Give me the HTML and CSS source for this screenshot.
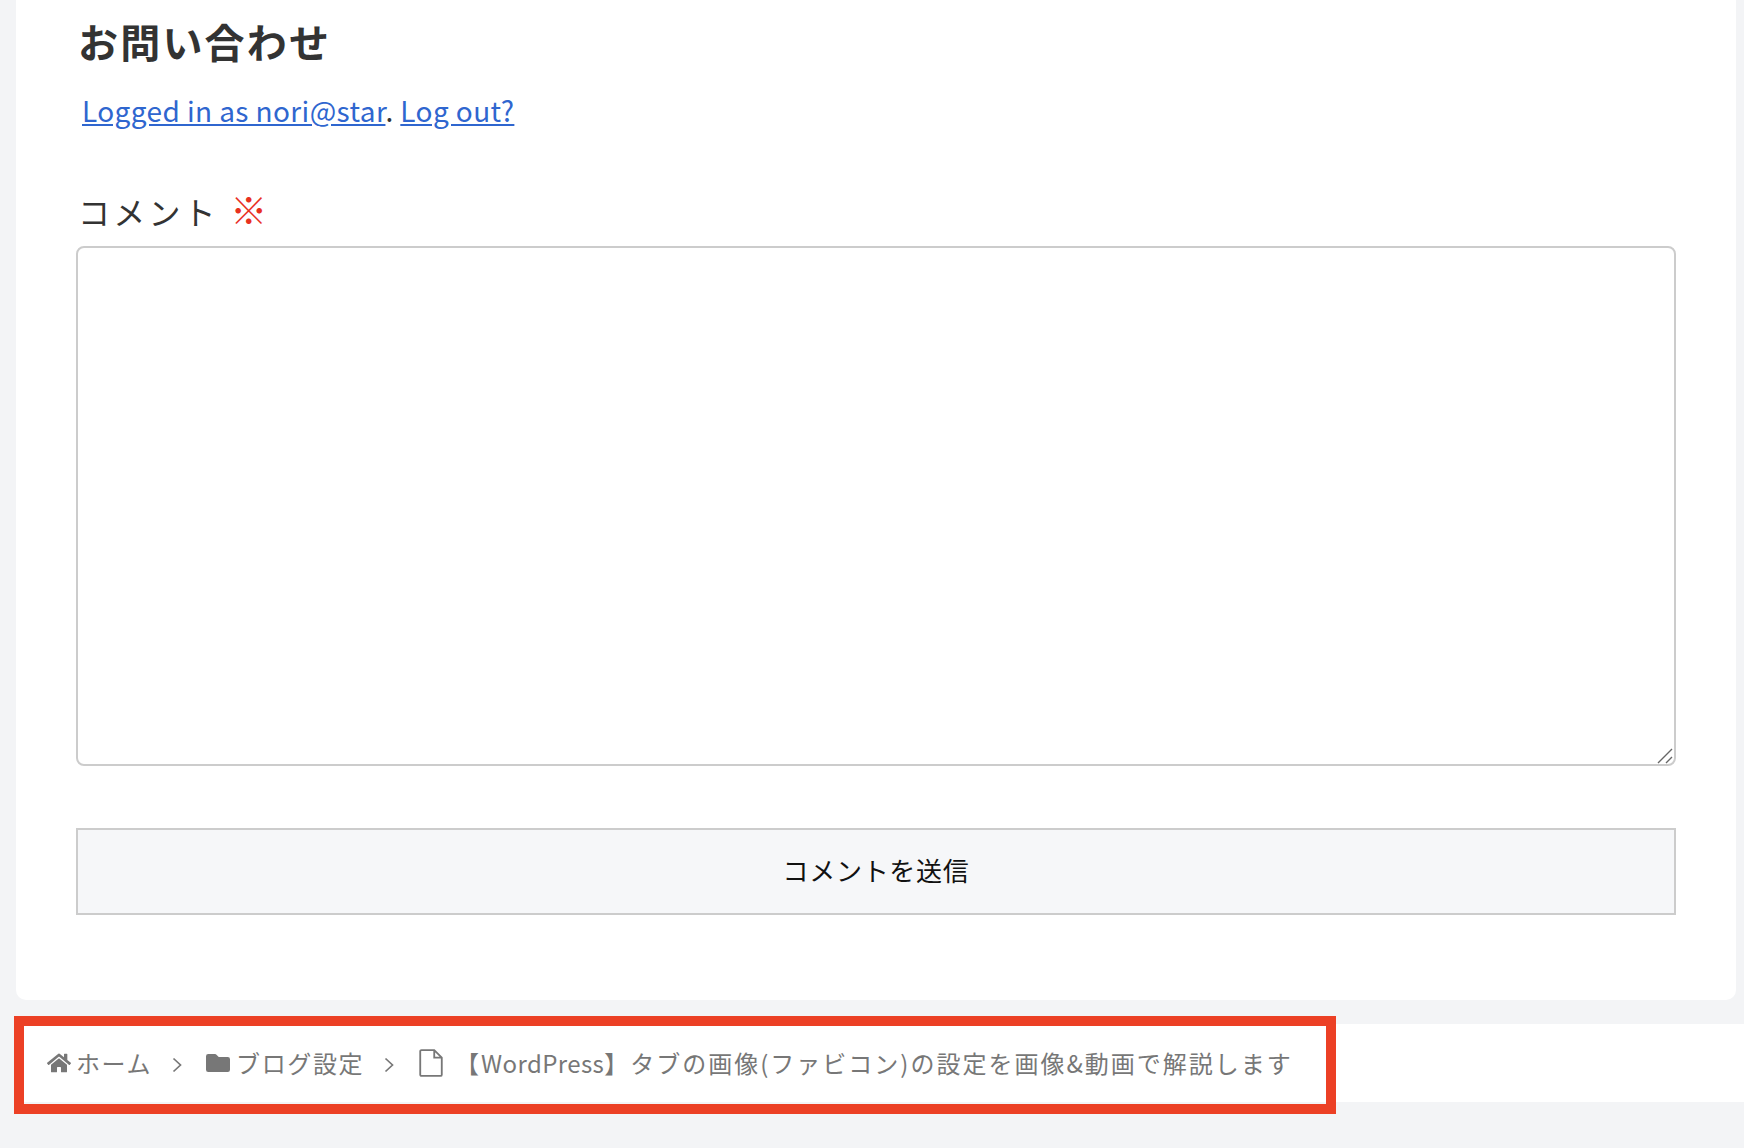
FILE: index.html
```html
<!DOCTYPE html>
<html lang="ja">
<head>
<meta charset="utf-8">
<title>お問い合わせ</title>
<link rel="stylesheet" href="styles.css">
</head>
<body>
<main class="card">
  <h2 class="title">お問い合わせ</h2>
  <p class="logged"><a href="#">Logged in as nori@star</a>. <a href="#">Log out?</a></p>
  <form class="form">
    <label class="label" for="comment">コメント <span class="req">※</span></label>
    <div class="area-wrap">
      <textarea id="comment" class="area"></textarea>
      <svg class="grip" viewBox="0 0 16 16"><path d="M1 15 15 1M9 15l6-6"/></svg>
    </div>
    <button type="button" class="submit"><span class="submit-text">コメントを送信</span></button>
  </form>
</main>
<nav class="crumbs">
  <svg class="ic ic-home" viewBox="0 0 576 512"><path d="M280.400 148.300 96 300.100V464a16 16 0 0 0 16 16l112-.3a16 16 0 0 0 15.900-16V368a16 16 0 0 1 16-16h64a16 16 0 0 1 16 16v95.600a16 16 0 0 0 16 16.100l112 .3a16 16 0 0 0 16-16V300L295.700 148.300a12.200 12.200 0 0 0-15.300 0zM571.600 251.500 488 182.600V44a12 12 0 0 0-12-12h-56a12 12 0 0 0-12 12v72.600L318.500 43a48 48 0 0 0-61 0L4.300 251.500a12 12 0 0 0-1.600 16.900l25.500 31a12 12 0 0 0 16.900 1.600l235.200-193.700a12.200 12.200 0 0 1 15.300 0L530.900 301a12 12 0 0 0 16.900-1.600l25.500-31a12 12 0 0 0-1.700-16.900z"/></svg>
  <span class="crumb">ホーム</span>
  <svg class="sep" viewBox="0 0 10 16"><path d="M1.500 1.500 8.500 8l-7 6.500"/></svg>
  <svg class="ic ic-folder" viewBox="0 0 512 512"><path d="M464 128H272l-54.600-54.600a32 32 0 0 0-22.600-9.400H48a48 48 0 0 0-48 48v288a48 48 0 0 0 48 48h416a48 48 0 0 0 48-48V176a48 48 0 0 0-48-48z"/></svg>
  <span class="crumb">ブログ設定</span>
  <svg class="sep sep-last" viewBox="0 0 10 16"><path d="M1.500 1.500 8.500 8l-7 6.500"/></svg>
  <svg class="ic-file" viewBox="0 0 22 26"><path d="M1 2.200C1 1.500 1.500 1 2.200 1H14l7 7v15.800c0 .7-.5 1.200-1.200 1.200H2.200C1.500 25 1 24.500 1 23.800zM14 1v7h7"/></svg>
  <span class="crumb crumb-post">【<span class="word">WordPress</span>】タブの画像(ファビコン)の設定を画像&amp;動画で解説します</span>
</nav>
<div class="mark" aria-hidden="true"></div>
</body>
</html>
```
FILE: styles.css
```css
* { box-sizing: border-box; }
html, body { margin: 0; height: 100%; overflow: hidden; }
body {
  background: #f3f4f6;
  color: #333;
  font-family: "Noto Sans CJK JP", "Noto Sans", sans-serif;
  position: relative;
}
.card {
  margin: 0 8px 0 16px;
  height: 1000px;
  padding: 14px 60px 0;
  background: #fff;
  border-radius: 0 0 10px 10px;
}
.title {
  margin: 0 0 0 2px;
  font-size: 40px;
  letter-spacing: 2.2px;
  line-height: 54px;
  font-weight: 700;
}
.logged {
  margin: 21px 0 0 6px;
  font-size: 28px;
  letter-spacing: 0.4px;
  line-height: 42px;
}
.logged a { color: #2f66cf; }
.form { display: flex; flex-direction: column; }
.label {
  margin: 54px 0 0 2px;
  font-size: 32px;
  letter-spacing: 3.2px;
  line-height: 48px;
}
.req { margin-left: 1px; color: #e8311f; font-size: 37px; line-height: 48px; }
.area-wrap { position: relative; margin-top: 11px; }
.area {
  display: block;
  width: 100%;
  height: 520px;
  border: 2px solid #ccc;
  border-radius: 8px;
  background: #fff;
  outline: 0;
  resize: none;
}
.grip {
  position: absolute;
  right: 3px;
  bottom: 2px;
  width: 16px;
  height: 16px;
  fill: none;
  stroke: #666;
  stroke-width: 1.4;
}
.submit {
  display: block;
  width: 100%;
  height: 87px;
  margin-top: 62px;
  padding: 0 0 4px;
  border: 2px solid #ccc;
  border-radius: 0;
  background: #f6f7f9;
  color: #111;
  font: 400 26px/1 "Noto Sans CJK JP", sans-serif;
  letter-spacing: 0.7px;
}
.crumbs {
  display: flex;
  align-items: center;
  height: 78px;
  margin: 24px 0 0 16px;
  padding-left: 31px;
  background: #fff;
  color: #777;
  font-size: 24px;
}
.crumb { padding-bottom: 2px; white-space: nowrap; letter-spacing: 1.6px; }
.crumb-post { letter-spacing: 2px; }
.word { letter-spacing: 0.4px; }
.ic { flex: none; fill: #777; }
.ic-home { width: 24px; height: 22px; margin-right: 5px; }
.ic-folder { width: 24px; height: 24px; margin-right: 6px; }
.ic-file { flex: none; width: 24px; height: 28px; margin-right: 12px; fill: none; stroke: #777; stroke-width: 1.700; }
.sep { flex: none; width: 10px; height: 16px; margin: 3px 24px 0 20px; fill: none; stroke: #777; stroke-width: 1.700; }
.sep-last { margin: 3px 25px 0 20px; }
.mark {
  position: absolute;
  left: 14px;
  top: 1016px;
  width: 1322px;
  height: 98px;
  border: 10px solid #ec4025;
}
```
